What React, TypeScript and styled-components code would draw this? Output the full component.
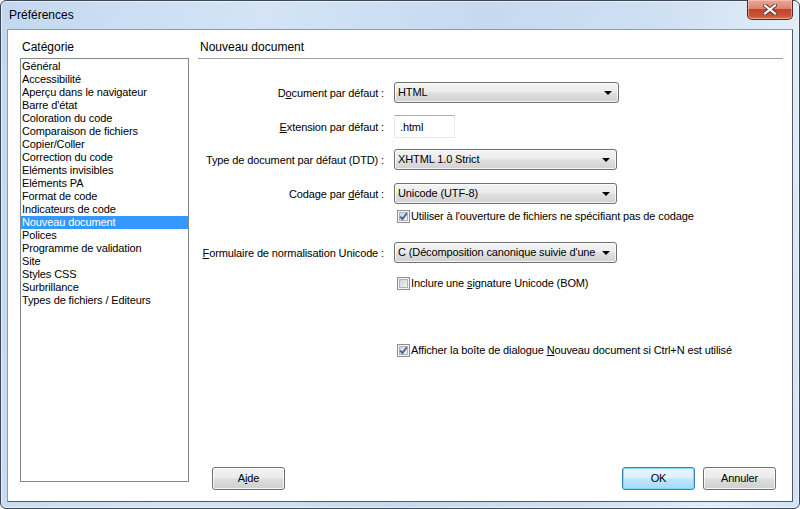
import React from 'react';
import styled, { createGlobalStyle } from 'styled-components';

const GlobalStyle = createGlobalStyle`
  html, body {
    margin: 0;
    padding: 0;
    background: #ffffff;
  }
  body {
    font-family: "Liberation Sans", Arial, sans-serif;
    font-size: 11px;
    letter-spacing: -0.12px;
    color: #000;
    overflow: hidden;
  }
  * {
    box-sizing: border-box;
  }
`;

const Window = styled.div`
  width: 800px;
  height: 509px;
  display: flex;
  flex-direction: column;
  border: 1px solid #3a4758;
  border-radius: 6px;
  background: linear-gradient(100deg, #c3d8ef 0%, #d4e4f6 30%, #c6d9ef 55%, #d0e0f3 75%, #e1ecf8 90%, #d3e2f4 100%);
  box-shadow: inset 0 0 0 1px rgba(255, 255, 255, 0.55);
`;

const TitleBar = styled.div`
  height: 28px;
  flex: none;
  display: flex;
  align-items: flex-start;
  justify-content: space-between;
  padding-left: 8px;
`;

const Title = styled.div`
  padding-top: 7px;
  line-height: 14px;
  font-size: 12px;
  letter-spacing: 0;
  color: #000;
`;

const CloseButton = styled.div`
  width: 46px;
  height: 20px;
  margin: -1px 6px 0 0;
  border: 1px solid #5a2a22;
  border-top: none;
  border-radius: 0 0 5px 5px;
  background: linear-gradient(#eaa596 0%, #dc8570 45%, #c5432a 50%, #cc5437 85%, #de7a57 100%);
  box-shadow: inset 0 0 0 1px rgba(255, 220, 210, 0.45);
  display: flex;
  align-items: center;
  justify-content: center;
`;

const Client = styled.div`
  flex: 1;
  min-height: 0;
  margin: 0 6px 6px 6px;
  background: #ffffff;
  border: 1px solid #8a9bb0;
  border-right-color: #4f5b68;
  border-bottom-color: #4f5b68;
  display: grid;
  grid-template-columns: 169px 1fr;
  column-gap: 9px;
  padding: 0 9px 0 12px;
`;

const LeftColumn = styled.div`
  display: flex;
  flex-direction: column;
  padding-bottom: 19px;
  min-height: 0;
`;

const SectionLabel = styled.div`
  height: 28px;
  padding: 10px 0 0 2px;
  line-height: 14px;
  font-size: 12px;
  letter-spacing: 0;
`;

const CategoryList = styled.div`
  flex: 1;
  border: 1px solid #828790;
  padding-top: 1px;
`;

const CategoryItem = styled.div<{ $selected?: boolean }>`
  height: 13px;
  line-height: 13px;
  padding-left: 1px;
  white-space: nowrap;
  background: ${(p) => (p.$selected ? '#3399ff' : 'transparent')};
  color: ${(p) => (p.$selected ? '#ffffff' : '#000000')};
`;

const RightColumn = styled.div`
  display: flex;
  flex-direction: column;
  padding-bottom: 11px;
`;

const PanelHeader = styled.div`
  height: 29px;
  padding: 10px 0 0 2px;
  line-height: 14px;
  font-size: 12px;
  letter-spacing: 0;
  border-bottom: 1px solid #a0a0a0;
`;

const Form = styled.div`
  display: flex;
  flex-direction: column;
`;

const FieldRow = styled.div<{ $gap: number; $h: number }>`
  display: grid;
  grid-template-columns: 188px auto;
  column-gap: 8px;
  align-items: center;
  margin-top: ${(p) => p.$gap}px;
  height: ${(p) => p.$h}px;
`;

const FieldLabel = styled.div`
  justify-self: end;
  white-space: nowrap;
  padding-right: 2px;
`;

const Combo = styled.div<{ $w: number }>`
  width: ${(p) => p.$w}px;
  height: 21px;
  border: 1px solid #707070;
  border-radius: 3px;
  background: linear-gradient(#f3f3f3 0%, #ececec 48%, #dfdfdf 52%, #d2d2d2 100%);
  box-shadow: inset 0 0 0 1px rgba(255, 255, 255, 0.75);
  display: flex;
  align-items: center;
  padding: 0 6px 0 3px;
  gap: 4px;
`;

const ComboText = styled.span`
  flex: 1;
  overflow: hidden;
  white-space: nowrap;
  line-height: 13px;
`;

const Arrow = styled.span`
  flex: none;
  width: 0;
  height: 0;
  border-left: 4px solid transparent;
  border-right: 4px solid transparent;
  border-top: 4px solid #000;
`;

const TextInput = styled.div`
  width: 61px;
  height: 23px;
  border: 1px solid #e3e9ef;
  border-top-color: #abadb3;
  background: #fff;
  padding: 5px 0 0 5px;
  line-height: 12px;
`;

const CheckLine = styled.label`
  grid-column: 2;
  display: flex;
  align-items: center;
  gap: 1px;
  margin-left: 3px;
  white-space: nowrap;
  line-height: 13px;
`;

const ButtonBar = styled.div`
  margin-top: auto;
  display: flex;
  align-items: center;
  gap: 8px;
  padding: 0 7px 0 14px;
`;

const Spacer = styled.div`
  flex: 1;
`;

const DialogButton = styled.div<{ $default?: boolean }>`
  width: 73px;
  height: 23px;
  border: 1px solid ${(p) => (p.$default ? '#3c7fb1' : '#707070')};
  border-radius: 3px;
  background: ${(p) =>
    p.$default
      ? 'linear-gradient(#eaf6fd 0%, #d9f0fc 48%, #bee6fd 52%, #a7d9f5 100%)'
      : 'linear-gradient(#f2f2f2 0%, #ebebeb 48%, #dddddd 52%, #cfcfcf 100%)'};
  box-shadow: inset 0 0 0 1px ${(p) => (p.$default ? 'rgba(122, 215, 250, 0.9)' : 'rgba(255, 255, 255, 0.8)')};
  display: flex;
  align-items: center;
  justify-content: center;
  line-height: 13px;
`;

const CloseGlyph = () => (
  <svg width="14" height="11" viewBox="0 0 14 11">
    <path d="M2 1.5 L12 9.5 M12 1.5 L2 9.5" stroke="#4a3b38" strokeWidth="4" strokeLinecap="square" />
    <path d="M2 1.5 L12 9.5 M12 1.5 L2 9.5" stroke="#ffffff" strokeWidth="2.2" strokeLinecap="square" />
  </svg>
);

const CheckBox = ({ checked }: { checked?: boolean }) => (
  <svg width="13" height="13" viewBox="0 0 13 13" style={{ flex: 'none' }}>
    <defs>
      <linearGradient id="cbfill" x1="0" y1="0" x2="1" y2="1">
        <stop offset="0" stopColor="#cbcfd5" />
        <stop offset="1" stopColor="#f6f6f6" />
      </linearGradient>
    </defs>
    <rect x="0.5" y="0.5" width="12" height="12" fill="#f4f4f4" stroke="#8e8f8f" />
    <rect x="2.5" y="2.5" width="8" height="8" fill="url(#cbfill)" stroke="#b0b4ba" />
    {checked && (
      <path d="M3.2 6.6 L5.4 9 L9.8 3.2" fill="none" stroke="#4a5f97" strokeWidth="1.9" />
    )}
  </svg>
);

const categories = [
  'Général',
  'Accessibilité',
  'Aperçu dans le navigateur',
  "Barre d'état",
  'Coloration du code',
  'Comparaison de fichiers',
  'Copier/Coller',
  'Correction du code',
  'Eléments invisibles',
  'Eléments PA',
  'Format de code',
  'Indicateurs de code',
  'Nouveau document',
  'Polices',
  'Programme de validation',
  'Site',
  'Styles CSS',
  'Surbrillance',
  'Types de fichiers / Editeurs',
];

const App: React.FC = () => {
  return (
    <>
      <GlobalStyle />
      <Window>
        <TitleBar>
          <Title>Préférences</Title>
          <CloseButton>
            <CloseGlyph />
          </CloseButton>
        </TitleBar>
        <Client>
          <LeftColumn>
            <SectionLabel>Catégorie</SectionLabel>
            <CategoryList>
              {categories.map((c) => (
                <CategoryItem key={c} $selected={c === 'Nouveau document'}>
                  {c}
                </CategoryItem>
              ))}
            </CategoryList>
          </LeftColumn>
          <RightColumn>
            <PanelHeader>Nouveau document</PanelHeader>
            <Form>
              <FieldRow $gap={23} $h={21}>
                <FieldLabel>
                  D<u>o</u>cument par défaut :
                </FieldLabel>
                <Combo $w={225}>
                  <ComboText>HTML</ComboText>
                  <Arrow />
                </Combo>
              </FieldRow>
              <FieldRow $gap={12} $h={23}>
                <FieldLabel>
                  <u>E</u>xtension par défaut :
                </FieldLabel>
                <TextInput>.html</TextInput>
              </FieldRow>
              <FieldRow $gap={11} $h={21}>
                <FieldLabel>Type de document par défaut (DTD) :</FieldLabel>
                <Combo $w={223}>
                  <ComboText>XHTML 1.0 Strict</ComboText>
                  <Arrow />
                </Combo>
              </FieldRow>
              <FieldRow $gap={13} $h={21}>
                <FieldLabel>
                  Codage par <u>d</u>éfaut :
                </FieldLabel>
                <Combo $w={223}>
                  <ComboText>Unicode (UTF-8)</ComboText>
                  <Arrow />
                </Combo>
              </FieldRow>
              <FieldRow $gap={6} $h={13}>
                <CheckLine>
                  <CheckBox checked />
                  Utiliser à l'ouverture de fichiers ne spécifiant pas de codage
                </CheckLine>
              </FieldRow>
              <FieldRow $gap={19} $h={21}>
                <FieldLabel>
                  <u>F</u>ormulaire de normalisation Unicode :
                </FieldLabel>
                <Combo $w={223}>
                  <ComboText>C (Décomposition canonique suivie d'une composition canonique)</ComboText>
                  <Arrow />
                </Combo>
              </FieldRow>
              <FieldRow $gap={14} $h={13}>
                <CheckLine>
                  <CheckBox />
                  <span>
                    Inclure une <u>s</u>ignature Unicode (BOM)
                  </span>
                </CheckLine>
              </FieldRow>
              <FieldRow $gap={54} $h={13}>
                <CheckLine>
                  <CheckBox checked />
                  <span>
                    Afficher la boîte de dialogue <u>N</u>ouveau document si Ctrl+N est utilisé
                  </span>
                </CheckLine>
              </FieldRow>
            </Form>
            <ButtonBar>
              <DialogButton>
                <span>
                  A<u>i</u>de
                </span>
              </DialogButton>
              <Spacer />
              <DialogButton $default>OK</DialogButton>
              <DialogButton>Annuler</DialogButton>
            </ButtonBar>
          </RightColumn>
        </Client>
      </Window>
    </>
  );
};

export default App;
